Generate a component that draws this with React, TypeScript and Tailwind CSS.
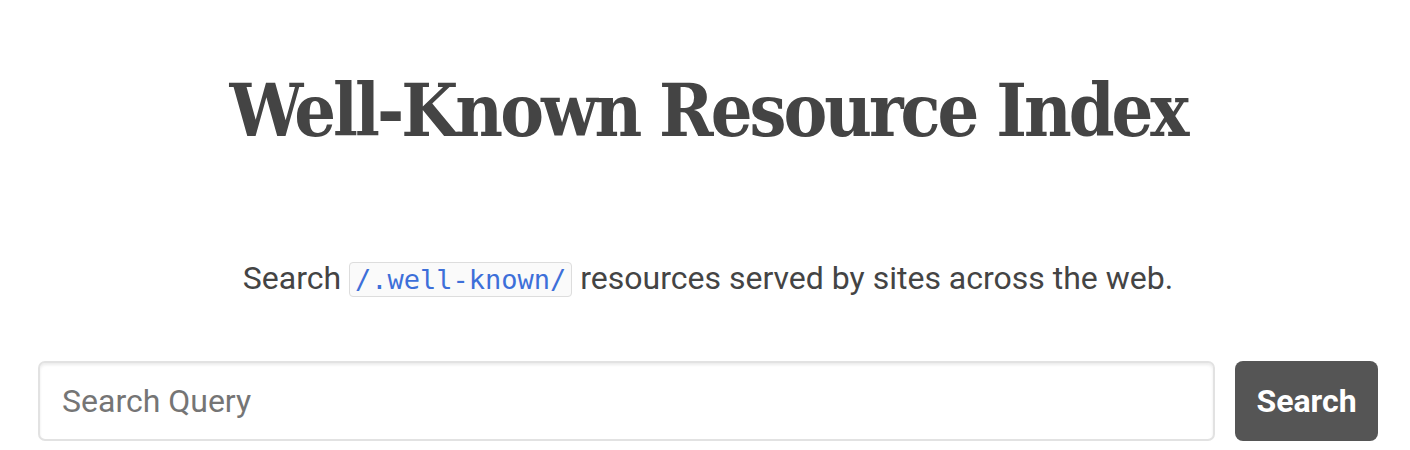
import React from 'react';

export default function App() {
  return (
    <div className="min-h-[450px] w-full bg-white pt-[60px] pr-[32px] pl-[38px] font-[Roboto,'Liberation_Sans',sans-serif] text-[#444]">
      <h1 className="text-center font-['DejaVu_Serif_Condensed','DejaVu_Serif',serif] text-[73px] leading-[100px] font-bold tracking-[-3px] text-[#444]">
        Well-Known Resource Index
      </h1>
      <p className="mt-[98px] text-center text-[32px] leading-[40px]">
        Search{' '}
        <code className="rounded-[4px] border border-[#ddd] bg-[#fafafa] px-[5px] py-[1px] font-['DejaVu_Sans_Mono','Liberation_Mono',monospace] text-[27px] text-[#3d6fd9]">
          /.well-known/
        </code>{' '}
        resources served by sites across the web.
      </p>
      <form className="mt-[61px] flex gap-[20px]" onSubmit={(e) => e.preventDefault()}>
        <input
          type="text"
          placeholder="Search Query"
          className="h-[80px] flex-1 rounded-[7px] border-2 border-[#e2e2e2] bg-white px-[22px] text-[32px] text-[#444] shadow-[inset_0_2px_3px_rgba(0,0,0,0.08)] outline-none placeholder:text-[#757575]"
        />
        <button
          type="submit"
          className="h-[80px] w-[143px] rounded-[8px] bg-[#555] text-[32px] font-bold text-white"
        >
          Search
        </button>
      </form>
    </div>
  );
}
